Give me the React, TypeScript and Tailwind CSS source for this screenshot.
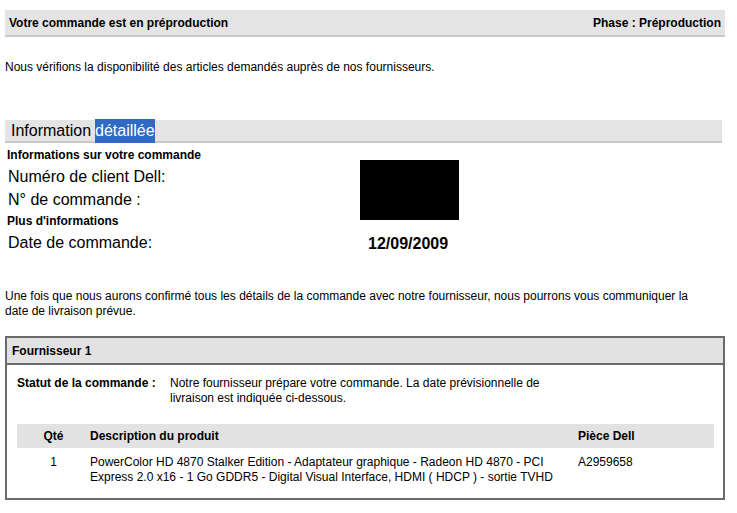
export default function App() {
  return (
    <div className="w-[737px] h-[513px] bg-white text-black font-['Liberation_Sans',Arial,sans-serif] overflow-hidden">
      {/* Status bar */}
      <div className="pt-[10px] pl-[5px]">
        <div className="w-[720px] h-[27px] bg-[#e4e4e4] border-b-2 border-[#c9c9c9] flex items-center justify-between px-[4px] text-[12px] font-bold">
          <span>Votre commande est en préproduction</span>
          <span>Phase : Préproduction</span>
        </div>
      </div>

      <p className="pl-[5px] mt-[23px] text-[12px] leading-[15px]">
        Nous vérifions la disponibilité des articles demandés auprès de nos fournisseurs.
      </p>

      {/* Detailed info */}
      <div className="pl-[5px] mt-[45px]">
        <div className="w-[717px] h-[23px] bg-[#e4e4e4] border-b-2 border-[#c9c9c9] flex items-center pl-[6px] text-[16px]">
          <span>Information </span>
          <span className="bg-[#316ac5] text-white ml-[4px]">détaillée</span>
        </div>
        <div className="flex">
          <div className="w-[355px] pl-[2px]">
            <div className="h-[16px] mt-[4px] flex items-center text-[12px] font-bold">Informations sur votre commande</div>
            <div className="h-[28px] flex items-center text-[16px] pl-[1px]">Numéro de client Dell:</div>
            <div className="h-[18px] flex items-center text-[16px] pl-[1px]">N° de commande :</div>
            <div className="h-[24px] flex items-center text-[12px] font-bold">Plus d'informations</div>
            <div className="h-[20px] flex items-center text-[16px] pl-[1px]">Date de commande:</div>
          </div>
          <div className="flex flex-col">
            <div className="w-[99px] h-[60px] bg-black mt-[17px]" />
            <div className="text-[16px] font-bold leading-[23px] mt-[12px] pl-[8px]">12/09/2009</div>
          </div>
        </div>
      </div>

      <p className="pl-[5px] pr-[30px] mt-[34px] text-[12px] leading-[15px]">
        Une fois que nous aurons confirmé tous les détails de la commande avec notre fournisseur, nous pourrons vous communiquer la date de livraison prévue.
      </p>

      {/* Supplier box */}
      <div className="ml-[5px] mt-[17px] w-[720px] h-[164px] border-2 border-[#6b6b6b]">
        <div className="h-[27px] bg-[#e2e2e2] border-b-2 border-[#6b6b6b] flex items-center pl-[5px] text-[12px] font-bold">
          Fournisseur 1
        </div>
        <div className="pl-[10px] pr-[9px]">
          <div className="flex mt-[11px] text-[12px] leading-[15px]">
            <div className="w-[153px] font-bold">Statut de la commande :</div>
            <div className="w-[390px]">
              Notre fournisseur prépare votre commande. La date prévisionnelle de livraison est indiquée ci-dessous.
            </div>
          </div>
          <div className="mt-[18px] h-[24px] bg-[#e2e2e2] flex items-center text-[12px] font-bold">
            <div className="w-[73px] text-center">Qté</div>
            <div className="w-[488px]">Description du produit</div>
            <div>Pièce Dell</div>
          </div>
          <div className="flex text-[12px] leading-[15px] mt-[7px]">
            <div className="w-[73px] text-center">1</div>
            <div className="w-[488px] pr-[10px]">
              PowerColor HD 4870 Stalker Edition - Adaptateur graphique - Radeon HD 4870 - PCI Express 2.0 x16 - 1 Go GDDR5 - Digital Visual Interface, HDMI ( HDCP ) - sortie TVHD
            </div>
            <div>A2959658</div>
          </div>
        </div>
      </div>
    </div>
  );
}
